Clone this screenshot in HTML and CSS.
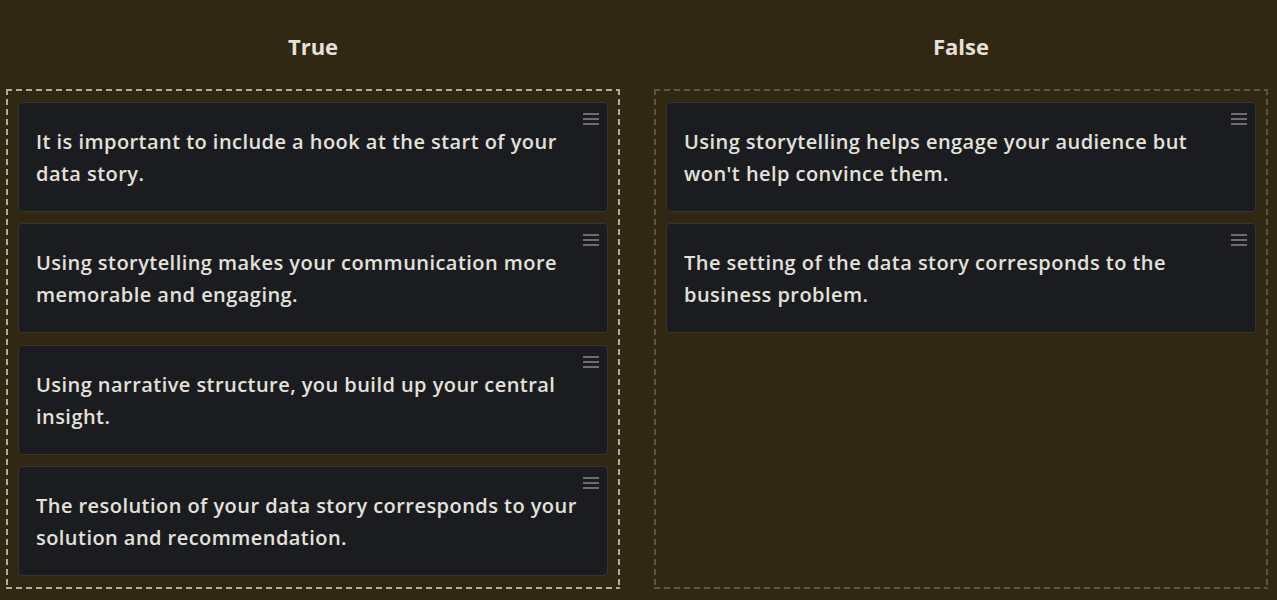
FILE: index.html
```html
<!DOCTYPE html>
<html>
<head>
<meta charset="utf-8">
<link rel="stylesheet" href="styles.css">
</head>
<body>
<div class="board">
  <section class="column">
    <h2 class="title">True</h2>
    <div class="zone zone-active">
      <div class="card"><p>It is important to include a hook at the start of your data story.</p><span class="handle"><i></i><i></i><i></i></span></div>
      <div class="card"><p>Using storytelling makes your communication more memorable and engaging.</p><span class="handle"><i></i><i></i><i></i></span></div>
      <div class="card"><p>Using narrative structure, you build up your central insight.</p><span class="handle"><i></i><i></i><i></i></span></div>
      <div class="card"><p>The resolution of your data story corresponds to your solution and recommendation.</p><span class="handle"><i></i><i></i><i></i></span></div>
    </div>
  </section>
  <section class="column">
    <h2 class="title">False</h2>
    <div class="zone">
      <div class="card"><p>Using storytelling helps engage your audience but won't help convince them.</p><span class="handle"><i></i><i></i><i></i></span></div>
      <div class="card"><p>The setting of the data story corresponds to the business problem.</p><span class="handle"><i></i><i></i><i></i></span></div>
    </div>
  </section>
</div>
</body>
</html>
```
FILE: styles.css
```css
html, body {
  margin: 0;
  padding: 0;
  background: #302812;
  height: 100%;
  overflow: hidden;
}
body {
  font-family: "Open Sans", "Noto Sans", sans-serif;
  color: #e3e1dc;
}
.board {
  display: grid;
  grid-template-columns: 614px 614px;
  column-gap: 34px;
  padding-left: 6px;
}
.column {
  display: flex;
  flex-direction: column;
}
.title {
  margin: 0;
  height: 89px;
  display: flex;
  align-items: center;
  justify-content: center;
  font-size: 22px;
  font-weight: 700;
  color: #e6e1d6;
  padding-top: 3px;
  box-sizing: border-box;
}
.zone {
  --dash: #5e5541;
  height: 500px;
  box-sizing: border-box;
  padding: 13px 12px;
  display: flex;
  flex-direction: column;
  gap: 11.4px;
  background:
    repeating-linear-gradient(90deg, var(--dash) 0 6px, transparent 6px 10px) left top / 100% 2px no-repeat,
    repeating-linear-gradient(90deg, var(--dash) 0 6px, transparent 6px 10px) left bottom / 100% 2px no-repeat,
    repeating-linear-gradient(180deg, var(--dash) 0 6px, transparent 6px 10px) left top / 2px 100% no-repeat,
    repeating-linear-gradient(180deg, var(--dash) 0 6px, transparent 6px 10px) right top / 2px 100% no-repeat;
}
.zone-active {
  --dash: #b3ab98;
}
.card {
  position: relative;
  height: 110px;
  box-sizing: border-box;
  background: #1b1c1f;
  border: 1px solid #37352c;
  border-radius: 4px;
  padding: 23px 30px 0 17px;
}
.card p {
  margin: 0;
  font-size: 20px;
  line-height: 32px;
  font-weight: 600;
  letter-spacing: 0.45px;
}
.handle {
  position: absolute;
  top: 10px;
  right: 8px;
  width: 16px;
  display: flex;
  flex-direction: column;
  gap: 3px;
}
.handle i {
  display: block;
  height: 2px;
  background: #6e6e6e;
}
```
